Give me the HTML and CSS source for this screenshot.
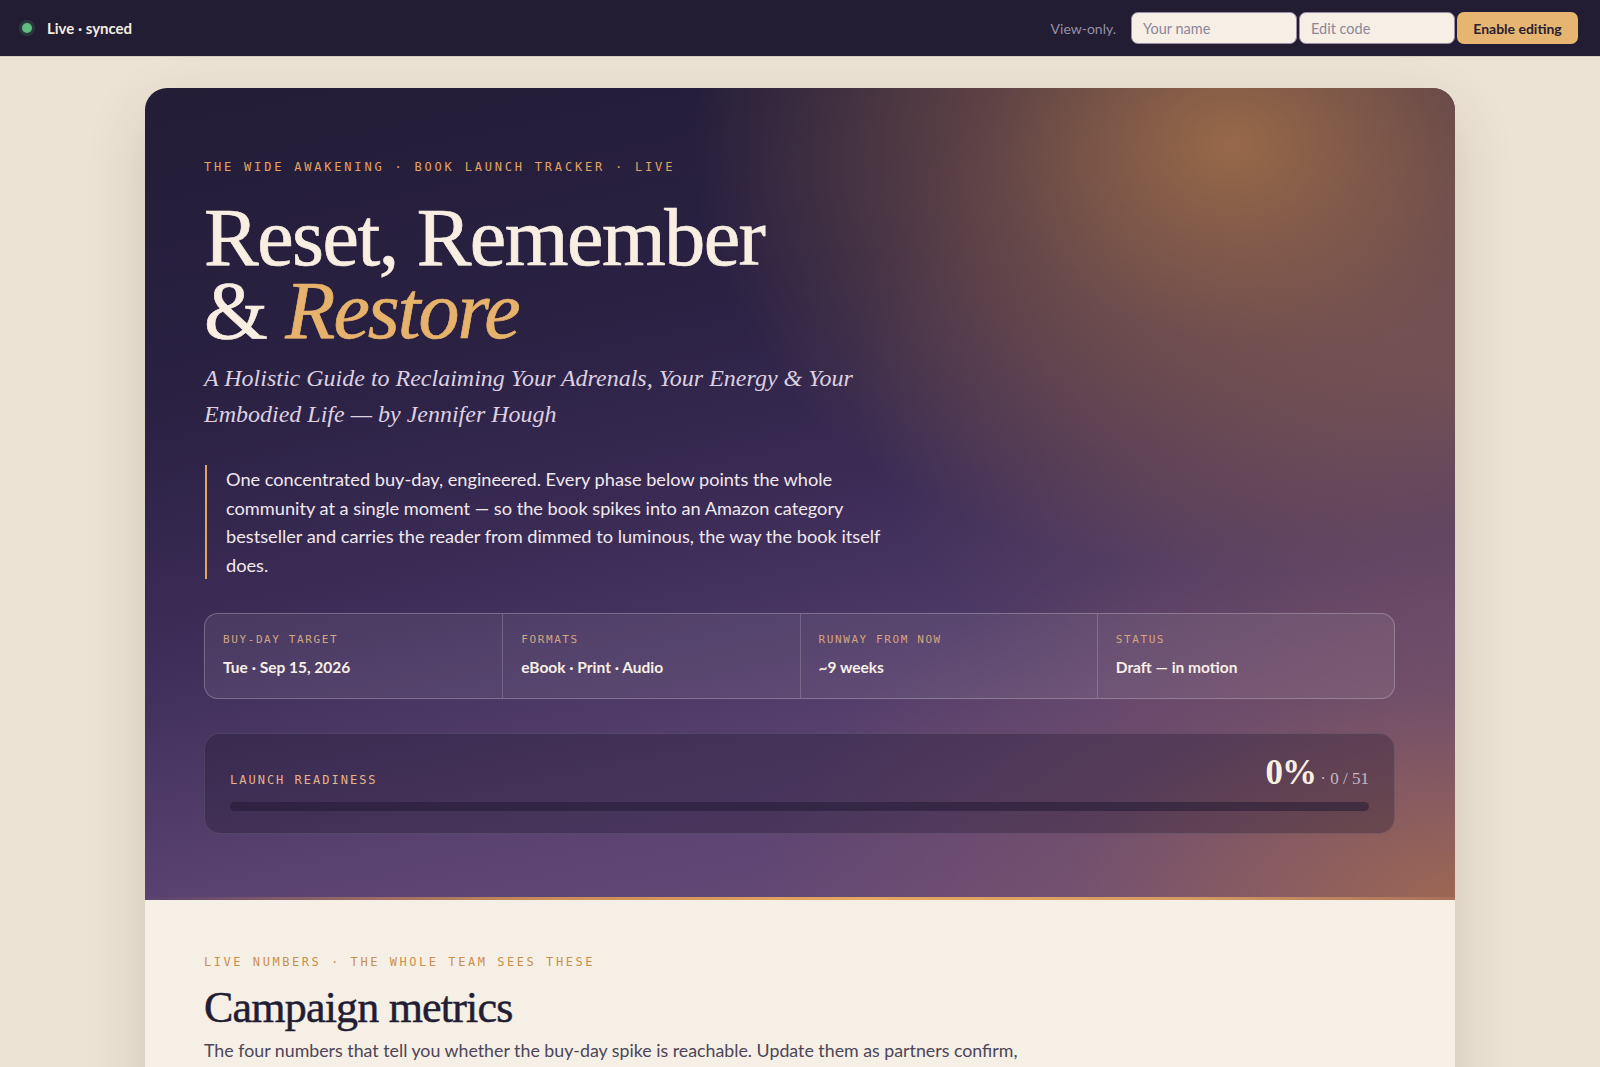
FILE: index.html
```html
<!DOCTYPE html>
<html lang="en">
<head>
<meta charset="UTF-8">
<meta name="viewport" content="width=device-width, initial-scale=1.0">
<title>Reset, Remember &amp; Restore — Launch Tracker</title>
<link rel="stylesheet" href="styles.css">
</head>
<body>
<div class="topbar">
  <div class="sync">
    <span class="dot"></span>
    <span>Live · synced</span>
  </div>
  <div class="editor">
    <span class="mode">View-only.</span>
    <input type="text" class="field name-field" placeholder="Your name">
    <input type="password" class="field code-field" placeholder="Edit code">
    <button class="enable">Enable editing</button>
  </div>
</div>

<div class="card">
  <header class="hero">
    <p class="eyebrow">The Wide Awakening · Book Launch Tracker · Live</p>
    <h1><span class="line">Reset, Remember</span><span class="line"><span class="amp">&amp;</span> <em>Restore</em></span></h1>
    <p class="subtitle">A Holistic Guide to Reclaiming Your Adrenals, Your Energy &amp; Your Embodied Life — by Jennifer Hough</p>
    <blockquote class="intro">One concentrated buy-day, engineered. Every phase below points the whole community at a single moment — so the book spikes into an Amazon category bestseller and carries the reader from dimmed to luminous, the way the book itself does.</blockquote>

    <div class="facts">
      <div class="fact">
        <span class="label">Buy-day target</span>
        <span class="value">Tue · Sep 15, 2026</span>
      </div>
      <div class="fact">
        <span class="label">Formats</span>
        <span class="value">eBook · Print · Audio</span>
      </div>
      <div class="fact">
        <span class="label">Runway from now</span>
        <span class="value">~9 weeks</span>
      </div>
      <div class="fact">
        <span class="label">Status</span>
        <span class="value">Draft — in motion</span>
      </div>
    </div>

    <div class="readiness">
      <div class="readiness-head">
        <span class="readiness-label">Launch readiness</span>
        <span class="readiness-score"><span id="pct">0%</span><span class="count"> · <span id="done">0</span> / <span id="total">51</span></span></span>
      </div>
      <div class="track"><div class="fill" id="fill" style="width: 0%"></div></div>
    </div>
  </header>
  <div class="hero-rule"></div>

  <section class="metrics">
    <p class="eyebrow dark">Live numbers · the whole team sees these</p>
    <h2>Campaign metrics</h2>
    <p class="lede">The four numbers that tell you whether the buy-day spike is reachable. Update them as partners confirm, and the bar above moves with them.</p>
  </section>
</div>
</body>
</html>
```

FILE: styles.css
```css
body {
  margin: 0;
  background: #ece3d5;
  font-family: Lato, "Noto Sans", sans-serif;
  color: #221d33;
}

/* top bar */
.topbar {
  height: 57px;
  display: flex;
  align-items: center;
  justify-content: space-between;
  padding: 0 22px 0 22px;
  background: #221d33;
  border-bottom: 1px solid #d9c9c0;
  box-sizing: border-box;
}
.sync {
  display: flex;
  align-items: center;
  gap: 15px;
  color: #f3ece0;
  font-size: 15px;
  font-weight: 700;
}
.dot {
  width: 10px;
  height: 10px;
  border-radius: 50%;
  background: #5fbd80;
  box-shadow: 0 0 0 3px rgba(95, 189, 128, 0.16);
}
.editor {
  display: flex;
  align-items: center;
}
.mode {
  color: #9791a6;
  font-size: 14px;
  margin-right: 15px;
}
.field {
  height: 32px;
  box-sizing: border-box;
  padding: 0 11px;
  border: 1px solid #9a8ea6;
  border-radius: 7px;
  background: #f5efe6;
  font-family: Lato, sans-serif;
  font-size: 14.5px;
  color: #2a2433;
  margin-right: 2px;
}
.field::placeholder {
  color: #8e8696;
}
.name-field { width: 166px; }
.code-field { width: 156px; }
.enable {
  height: 32px;
  width: 121px;
  border: none;
  border-radius: 7px;
  background: #e6b572;
  color: #2a2030;
  font-family: Lato, sans-serif;
  font-size: 14px;
  font-weight: 700;
}

/* card */
.card {
  width: 1310px;
  margin: 31px auto 0;
  border-radius: 22px;
  overflow: hidden;
  background: #f6efe5;
  box-shadow: 0 24px 60px rgba(70, 50, 30, 0.16);
}
.hero {
  padding: 72px 60px 63px 59px;
  background:
    radial-gradient(ellipse 540px 430px at 83% 7%, rgba(156, 108, 72, 0.95) 0, rgba(140, 96, 74, 0.55) 45%, rgba(120, 84, 80, 0) 100%),
    radial-gradient(ellipse 700px 380px at 100% 100%, rgba(160, 104, 80, 0.92) 0, rgba(140, 92, 96, 0.35) 55%, rgba(120, 80, 100, 0) 100%),
    radial-gradient(ellipse 600px 420px at 100% 35%, rgba(120, 84, 92, 0.7) 0, rgba(110, 78, 100, 0) 100%),
    linear-gradient(168deg, #231d36 0%, #2a2143 30%, #3d2d58 52%, #5a4270 75%, #6c4e7b 100%);
}
.eyebrow {
  margin: 0;
  font-family: "DejaVu Sans Mono", "Liberation Mono", monospace;
  font-size: 12px;
  letter-spacing: 2.8px;
  text-transform: uppercase;
  color: #e3a363;
}
.eyebrow.dark {
  letter-spacing: 2.55px;
  color: #c98f4c;
}
.hero h1 {
  margin: 27px 0 0;
  font-family: "Liberation Serif", "DejaVu Serif", serif;
  font-weight: 400;
  font-size: 82px;
  letter-spacing: -1.5px;
  color: #f8efe2;
  -webkit-text-stroke: 0.7px #f8efe2;
}
.hero h1 .line {
  display: block;
  height: 73px;
  line-height: 73px;
}
.hero h1 em {
  color: #e6b26c;
  letter-spacing: -2px;
  -webkit-text-stroke: 0.7px #e6b26c;
}
.subtitle {
  margin: 13px 0 0;
  max-width: 660px;
  font-family: "Liberation Serif", "DejaVu Serif", serif;
  font-style: italic;
  font-size: 24px;
  line-height: 36px;
  color: #ddd0e0;
}
.intro {
  margin: 33px 0 0 1px;
  max-width: 672px;
  padding: 0 0 0 19px;
  border-left: 2px solid #e3a363;
  font-size: 18.2px;
  line-height: 28.6px;
  color: #f1e8ee;
}

/* four quick facts */
.facts {
  margin-top: 34px;
  display: grid;
  grid-template-columns: repeat(4, 1fr);
  border: 1px solid rgba(255, 255, 255, 0.24);
  border-radius: 14px;
  background: rgba(255, 255, 255, 0.07);
}
.fact {
  padding: 19px 18px 22px;
  display: flex;
  flex-direction: column;
  gap: 12px;
  border-left: 1px solid rgba(255, 255, 255, 0.18);
}
.fact:first-child {
  border-left: none;
}
.label {
  font-family: "DejaVu Sans Mono", monospace;
  font-size: 11px;
  letter-spacing: 1.6px;
  text-transform: uppercase;
  color: #d4a580;
}
.value {
  font-size: 15.5px;
  font-weight: 700;
  color: #f7efe6;
}

/* readiness bar */
.readiness {
  margin-top: 34px;
  padding: 19px 25px 22px;
  border: 1px solid rgba(255, 255, 255, 0.1);
  border-radius: 16px;
  background: rgba(28, 20, 44, 0.3);
}
.readiness-head {
  display: flex;
  justify-content: space-between;
  align-items: baseline;
}
.readiness-label {
  font-family: "DejaVu Sans Mono", monospace;
  font-size: 12px;
  letter-spacing: 2px;
  text-transform: uppercase;
  color: #e6b489;
}
.readiness-score {
  font-family: "Liberation Serif", serif;
  color: #f8efe2;
}
#pct {
  font-size: 35px;
  font-weight: 700;
  letter-spacing: -1px;
}
.count {
  font-size: 17px;
  color: #c9b7c2;
}
.track {
  margin-top: 9px;
  height: 9px;
  border-radius: 5px;
  background: rgba(30, 22, 48, 0.5);
}
.fill {
  height: 100%;
  border-radius: 5px;
  background: #e6b26c;
}
.hero-rule {
  height: 3px;
  background: linear-gradient(90deg, #5a4270 0%, #c98a5a 30%, #e4a862 55%, #d49a62 80%, #a8705a 100%);
}

/* metrics section */
.metrics {
  padding: 55px 60px 40px 59px;
}
.metrics h2 {
  margin: 13px 0 0;
  font-family: "Liberation Serif", serif;
  font-weight: 400;
  font-size: 44px;
  line-height: 52px;
  letter-spacing: -0.8px;
  color: #221d33;
  -webkit-text-stroke: 0.5px #221d33;
}
.lede {
  margin: 3px 0 0;
  max-width: 835px;
  font-size: 17.8px;
  line-height: 26px;
  color: #4c4558;
}
```
